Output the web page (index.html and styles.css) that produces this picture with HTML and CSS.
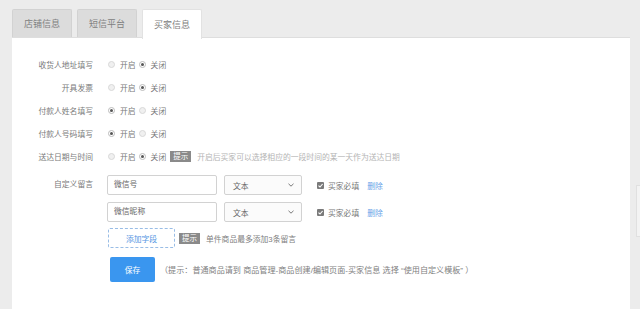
FILE: index.html
```html
<!DOCTYPE html>
<html lang="zh-CN">
<head>
    <meta charset="UTF-8">
    <meta name="viewport" content="width=device-width, initial-scale=1.0">
    <title>买家信息</title>
    <link rel="stylesheet" href="styles.css">
</head>
<body>
    <div class="page">
        <!-- 标签页 -->
        <div class="tabs">
            <div class="tab">店铺信息</div>
            <div class="tab">短信平台</div>
            <div class="tab active">买家信息</div>
        </div>

        <div class="panel">
            <div class="form">
                <div class="label">收货人地址填写</div>
                <div class="field">
                    <span class="option"><i class="radio"></i>开启</span>
                    <span class="option"><i class="radio checked"></i>关闭</span>
                </div>

                <div class="label">开具发票</div>
                <div class="field">
                    <span class="option"><i class="radio"></i>开启</span>
                    <span class="option"><i class="radio checked"></i>关闭</span>
                </div>

                <div class="label">付款人姓名填写</div>
                <div class="field">
                    <span class="option"><i class="radio checked"></i>开启</span>
                    <span class="option"><i class="radio"></i>关闭</span>
                </div>

                <div class="label">付款人号码填写</div>
                <div class="field">
                    <span class="option"><i class="radio checked"></i>开启</span>
                    <span class="option"><i class="radio"></i>关闭</span>
                </div>

                <div class="label">送达日期与时间</div>
                <div class="field">
                    <span class="option"><i class="radio"></i>开启</span>
                    <span class="option"><i class="radio checked"></i>关闭</span>
                    <span class="badge">提示</span>
                    <span class="hint">开启后买家可以选择相应的一段时间的某一天作为送达日期</span>
                </div>

                <div class="label label-top">自定义留言</div>
                <div class="messages">
                    <div class="msg-row">
                        <div class="input">微信号</div>
                        <div class="select">文本
                            <svg width="6" height="4" viewBox="0 0 6 4"><path d="M0.5 0.8 L3 3.2 L5.5 0.8" fill="none" stroke="#777" stroke-width="1"/></svg>
                        </div>
                        <span class="check">
                            <svg width="7" height="7" viewBox="0 0 7 7"><rect x="0" y="0" width="7" height="7" rx="1" fill="#7a7a7a"/><path d="M1.5 3.6 L3 5 L5.6 2" fill="none" stroke="#fff" stroke-width="1.1"/></svg>
                            买家必填
                        </span>
                        <a class="link">删除</a>
                    </div>
                    <div class="msg-row">
                        <div class="input">微信昵称</div>
                        <div class="select">文本
                            <svg width="6" height="4" viewBox="0 0 6 4"><path d="M0.5 0.8 L3 3.2 L5.5 0.8" fill="none" stroke="#777" stroke-width="1"/></svg>
                        </div>
                        <span class="check">
                            <svg width="7" height="7" viewBox="0 0 7 7"><rect x="0" y="0" width="7" height="7" rx="1" fill="#7a7a7a"/><path d="M1.5 3.6 L3 5 L5.6 2" fill="none" stroke="#fff" stroke-width="1.1"/></svg>
                            买家必填
                        </span>
                        <a class="link">删除</a>
                    </div>
                    <div class="add-row">
                        <div class="add-btn">添加字段</div>
                        <span class="badge">提示</span>
                        <span class="note">单件商品最多添加3条留言</span>
                    </div>
                </div>
            </div>

            <div class="save-row">
                <button class="save-btn">保存</button>
                <span class="save-tip">（提示：普通商品请到 商品管理-商品创建/编辑页面-买家信息 选择 “使用自定义模板” ）</span>
            </div>
        </div>
    </div>

    <div class="side-tab"></div>
</body>
</html>
```

FILE: styles.css
```css
* {
    margin: 0;
    padding: 0;
    box-sizing: border-box;
    font-family: 'Liberation Sans', 'Noto Sans CJK SC', sans-serif;
}

html, body {
    width: 640px;
    height: 309px;
    overflow: hidden;
}

body {
    background: #ececec;
    color: #777;
    font-size: 7.8px;
}

.page {
    padding: 9px 10px 0 12px;
}

/* 标签页 */
.tabs {
    display: flex;
    gap: 5px;
    height: 29px;
    border-bottom: 1px solid #dedede;
}

.tab {
    width: 60px;
    height: 28px;
    background: #dcdcdc;
    border: 1px solid #d2d2d2;
    border-bottom: none;
    border-radius: 2px 2px 0 0;
    color: #808080;
    font-size: 9px;
    display: flex;
    align-items: center;
    justify-content: center;
}

.tab.active {
    background: #fff;
    border-color: #e2e2e2;
    height: 30px;
    position: relative;
    z-index: 2;
}

.panel {
    background: #fff;
    width: 618px;
    height: 272px;
    padding-top: 15px;
}

/* 表单 */
.form {
    display: grid;
    grid-template-columns: 81px 1fr;
    column-gap: 15px;
    grid-auto-rows: 23px;
}

.label {
    text-align: right;
    display: flex;
    align-items: center;
    justify-content: flex-end;
    color: #7a7a7a;
}

.label-top {
    align-items: flex-start;
    padding-top: 3px;
    margin-top: 7px;
}

.field {
    display: flex;
    align-items: center;
}

.option {
    display: inline-flex;
    align-items: center;
    margin-right: 3px;
    color: #7a7a7a;
}

.radio {
    width: 7px;
    height: 7px;
    border-radius: 50%;
    border: 1px solid #d8d8d8;
    background: #f0f0f0;
    margin-right: 5px;
    position: relative;
}

.radio.checked {
    border-color: #bbb;
    background: #fff;
}

.radio.checked::after {
    content: "";
    position: absolute;
    left: 1px;
    top: 1px;
    width: 3px;
    height: 3px;
    border-radius: 50%;
    background: #555;
}

.badge {
    display: inline-block;
    background: #8a8a8a;
    color: #fff;
    padding: 0 3px;
    line-height: 11px;
    font-size: 7.5px;
    margin-left: 1px;
}

.hint {
    color: #b4b4b4;
    margin-left: 6px;
}

/* 自定义留言 */
.messages {
    grid-row: span 4;
    margin-top: 7px;
    display: flex;
    flex-direction: column;
    gap: 7px;
}

.msg-row {
    display: flex;
    align-items: center;
    height: 20px;
}

.input {
    width: 110px;
    height: 20px;
    border: 1px solid #d2d2d2;
    border-radius: 2px;
    padding-left: 6px;
    line-height: 18px;
    color: #666;
    margin-left: -1px;
}

.select {
    width: 78px;
    height: 20px;
    border: 1px solid #d2d2d2;
    border-radius: 2px;
    margin-left: 7px;
    padding: 0 7px 0 8px;
    display: flex;
    align-items: center;
    justify-content: space-between;
    color: #666;
    background: #fbfbfb;
}

.check {
    margin-left: 15px;
    display: inline-flex;
    align-items: center;
    gap: 4px;
    color: #777;
}

.link {
    color: #6aa4e8;
    margin-left: 8px;
}

.add-row {
    display: flex;
    align-items: center;
    margin-top: -1px;
}

.add-btn {
    width: 67px;
    height: 20px;
    border: 1px dashed #99bde6;
    border-radius: 2px;
    color: #5596e2;
    display: flex;
    align-items: center;
    justify-content: center;
    margin-right: 3px;
}

.note {
    margin-left: 6px;
    color: #808080;
}

/* 保存按钮 */
.save-row {
    display: flex;
    align-items: center;
    padding-left: 98px;
    margin-top: -3px;
}

.save-btn {
    width: 45px;
    height: 25px;
    background: #3a96ef;
    color: #fff;
    border: none;
    border-radius: 2px;
    font-size: 7.8px;
    margin-right: 5px;
}

.save-tip {
    color: #808080;
    font-size: 8.1px;
}

.side-tab {
    position: absolute;
    right: 0;
    top: 185px;
    width: 4px;
    height: 52px;
    border: 1px solid #e0e0e0;
    border-right: none;
    background: #f3f3f3;
}
```
